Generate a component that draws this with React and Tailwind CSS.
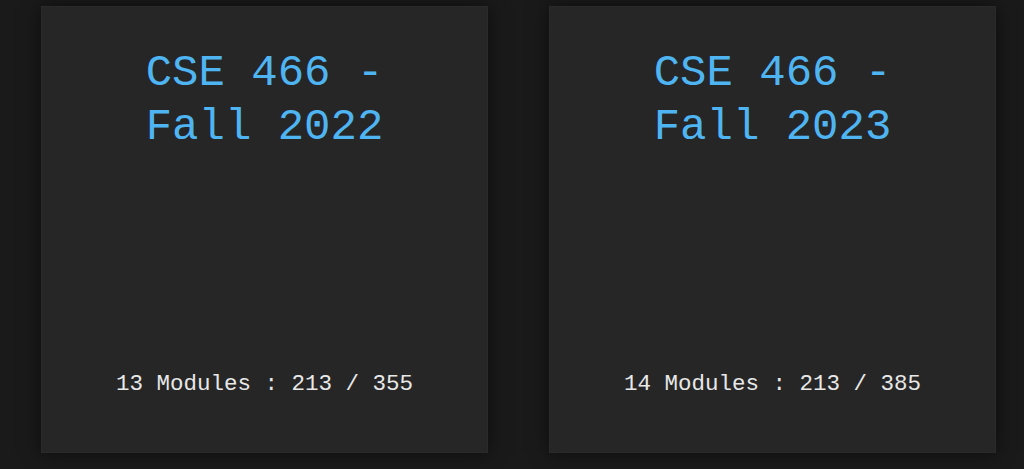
export default function App() {
  const cards = [
    { title: ["CSE 466 -", "Fall 2022"], mods: 13, a: 213, b: 355 },
    { title: ["CSE 466 -", "Fall 2023"], mods: 14, a: 213, b: 385 },
  ];
  return (
    <div className="w-[1024px] h-[469px] overflow-hidden bg-[#1a1a1a] flex items-start gap-[61px] pl-[41px] pt-[6px]" style={{ fontFamily: '"Liberation Mono", "DejaVu Sans Mono", monospace' }}>
      {cards.map((c, i) => (
        <div key={i} className="w-[447px] h-[447px] bg-[#262626] border border-[#2a2a2a] shadow-[0_0_18px_rgba(0,0,0,0.55)] flex flex-col items-center justify-between pt-[39px] pb-[54px]">
          <div className="text-[44px] leading-[54px] text-[#4fb5f2] text-center">
            {c.title[0]}
            <br />
            {c.title[1]}
          </div>
          <div className="text-[22.5px] leading-[28px] text-[#e8e8e8]">
            {c.mods} Modules : {c.a} / {c.b}
          </div>
        </div>
      ))}
    </div>
  );
}
